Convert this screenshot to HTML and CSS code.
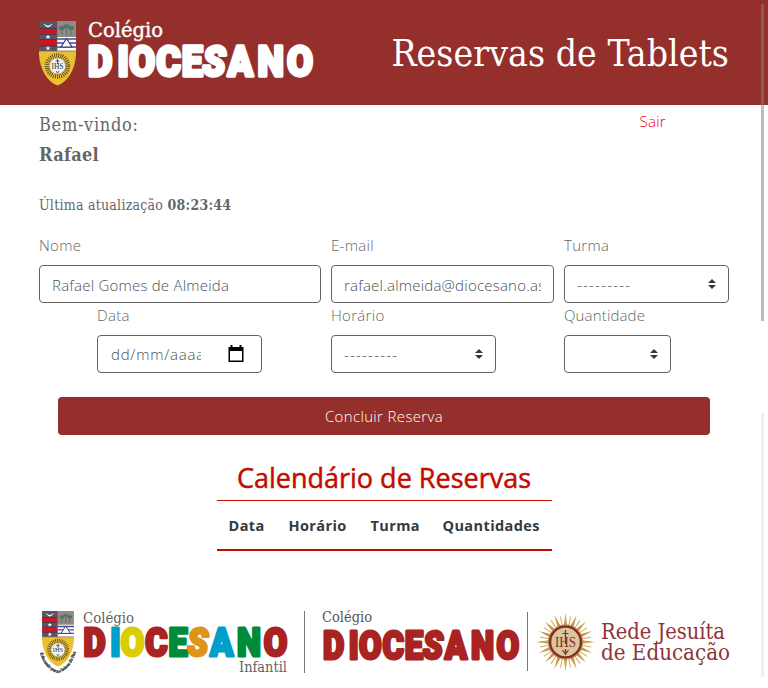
FILE: index.html
```
<!DOCTYPE html>
<html lang="pt-BR">
<head>
<meta charset="utf-8">
<title>Reservas de Tablets</title>
<link rel="stylesheet" href="styles.css">
</head>
<body>
<svg class="defs" width="0" height="0" aria-hidden="true">
  <symbol id="crest" viewBox="0 0 37 65">
    <clipPath id="shield"><path d="M0 0H37V34C36 48 29 61 18.500 64.500C8 61 1 48 0 34Z"/></clipPath>
    <g clip-path="url(#shield)">
      <rect width="37" height="65" fill="#eabf32"/>
      <rect width="18" height="30" fill="#595365"/>
      <path d="M0 8H18V13H0ZM0 19H18V24.500H0Z" fill="#cb1624"/>
      <path d="M0 7.500H18M0 13.300H18M0 18.500H18M0 24.800H18" stroke="#332c3c" stroke-width=".6"/>
      <path d="M5 3Q9 7 13 3Q9 9 5 3Z" fill="#fff" stroke="#fff" stroke-width=".6"/>
      <path d="M9 13.500L9.700 15.200H11.500L10.100 16.300L10.600 18L9 17L7.400 18L7.900 16.300L6.500 15.200H8.300ZM9 24.700L9.700 26.400H11.500L10.100 27.500L10.600 29.200L9 28.200L7.400 29.200L7.900 27.500L6.500 26.400H8.300Z" fill="#fff"/>
      <rect x="18" width="19" height="16" fill="#918b85"/>
      <g fill="#52736a"><ellipse cx="23" cy="7" rx="3" ry="2"/><ellipse cx="32" cy="7" rx="3" ry="2"/><ellipse cx="27.500" cy="5" rx="3" ry="1.800"/></g>
      <path d="M23 7V14M32 7V14M27.500 5V14" stroke="#52736a" stroke-width="1"/>
      <rect x="18" y="16" width="19" height="14" fill="#fff"/>
      <path d="M18 18H37M18 22H37M18 26H37" stroke="#4a489c" stroke-width="1.500"/>
      <path d="M27.500 17.500L33 26H22Z" fill="#fff" stroke="#34356f" stroke-width="1.100"/>
      <path d="M18 0V30M0 30H37" stroke="#6c6051" stroke-width=".7"/>
      <circle cx="18.500" cy="45" r="10.500" fill="none" stroke="#4a4120" stroke-width="4.500" stroke-dasharray=".8 1.200"/>
      <circle cx="18.500" cy="45" r="8" fill="#f4f2ed" stroke="#777" stroke-width=".4"/>
      <text x="18.500" y="48" class="ihs" font-size="7.500" fill="#333">IHS</text>
      <path d="M18.500 38V43M16.500 40H20.500M17 50L18.500 52L20 50" stroke="#333" stroke-width=".8" fill="none"/>
    </g>
  </symbol>
</svg>

<header class="topbar">
  <svg class="brand" width="276" height="66" viewBox="0 0 276 66">
    <use href="#crest" x="0" y="0" width="37" height="65"/>
    <text class="serif" x="49" y="16" font-size="20" textLength="75" lengthAdjust="spacingAndGlyphs" fill="#fff" stroke="#fff" stroke-width=".35">Colégio</text>
    <g transform="translate(49 55) scale(.3268 .376)"><text class="wordmark" fill="#fff" stroke="#fff" x="0 90 126 209 287 351 427 519 609">DIOCE<tspan class="lean">S</tspan>ANO</text></g>
  </svg>
  <h1>Reservas de Tablets</h1>
</header>

<main>
  <section class="welcome">
    <div>
      <p class="hello">Bem-vindo:</p>
      <p class="hello user">Rafael</p>
      <p class="updated">Última atualização <b>08:23:44</b></p>
    </div>
    <a class="logout">Sair</a>
  </section>

  <form>
    <div class="fields">
      <label>Nome<input value="Rafael Gomes de Almeida"></label>
      <label>E-mail<input value="rafael.almeida@diocesano.asav.org.br"></label>
      <label>Turma<span class="control select"><i>---------</i><svg width="8" height="10" viewBox="0 0 4 5"><path d="M2 0L0 2h4zm0 5L0 3h4z"/></svg></span></label>
      <label class="date">Data<span class="control"><span class="mask">dd/mm/aaaa</span><svg class="cal" width="16" height="18" viewBox="0 0 16 18"><path fill-rule="evenodd" d="M2.500 0H4.500V2H11.500V0H13.500V2H15.500V17H.5V2H2.500ZM2 6V15.500H14V6Z"/></svg></span></label>
      <label class="time">Horário<span class="control select"><i>---------</i><svg width="8" height="10" viewBox="0 0 4 5"><path d="M2 0L0 2h4zm0 5L0 3h4z"/></svg></span></label>
      <label class="qty">Quantidade<span class="control select"><i></i><svg width="8" height="10" viewBox="0 0 4 5"><path d="M2 0L0 2h4zm0 5L0 3h4z"/></svg></span></label>
    </div>
    <button type="button">Concluir Reserva</button>
  </form>

  <section class="calendar">
    <h2>Calendário de Reservas</h2>
    <table><thead><tr><th>Data</th><th>Horário</th><th>Turma</th><th>Quantidades</th></tr></thead></table>
  </section>
</main>

<footer>
  <svg width="249" height="70" viewBox="0 0 249 70">
    <use href="#crest" x="3" y="3" width="32" height="56"/>
    <path id="ribbon" d="M1 45C4 56 11 63 19 65C27 63 34 55 37 43" fill="none"/>
    <text class="motto"><textPath href="#ribbon" textLength="57">Educando para a beleza da Paz</textPath></text>
    <text class="serif" x="44" y="15" font-size="15" textLength="51" lengthAdjust="spacingAndGlyphs" fill="#626262">Colégio</text>
    <g transform="translate(44.500 48) scale(.296 .337)"><text class="wordmark" x="0 90 126 209 287 351 427 519 609"><tspan class="c-red">D</tspan><tspan class="c-sky">I</tspan><tspan class="c-yellow">O</tspan><tspan class="c-red">C</tspan><tspan class="c-green">E</tspan><tspan class="c-orange lean">S</tspan><tspan class="c-sky">A</tspan><tspan class="c-green">N</tspan><tspan class="c-red">O</tspan></text></g>
    <text class="serif" x="200" y="64" font-size="15" textLength="48" lengthAdjust="spacingAndGlyphs" fill="#626262">Infantil</text>
  </svg>
  <span class="rule first"></span>
  <svg width="198" height="68" viewBox="0 0 198 68">
    <text class="serif" x="0" y="14" font-size="15" textLength="50" lengthAdjust="spacingAndGlyphs" fill="#565656">Colégio</text>
    <g transform="translate(1 51.300) scale(.285 .333)"><text class="wordmark c-red" x="0 90 126 209 287 351 427 519 609">DIOCE<tspan class="lean">S</tspan>ANO</text></g>
  </svg>
  <span class="rule second"></span>
  <svg width="196" height="68" viewBox="0 0 196 68">
    <g transform="translate(30.500 34)">
      <g fill="#c89a43"><path id="rays" d="M-2 -15L0 -29L2 -15ZM-2 15L0 29L2 15ZM-15 -2L-29 0L-15 2ZM15 -2L29 0L15 2Z"/><use href="#rays" transform="rotate(22.500)"/><use href="#rays" transform="rotate(45)"/><use href="#rays" transform="rotate(67.500)"/></g>
      <g stroke="#d1aa65" stroke-width="1"><path id="thin" d="M0 -26V26M-26 0H26"/><use href="#thin" transform="rotate(11.250)"/><use href="#thin" transform="rotate(33.750)"/><use href="#thin" transform="rotate(56.250)"/><use href="#thin" transform="rotate(78.750)"/></g>
      <circle r="15.500" fill="#dbc69b" stroke="#852b2c" stroke-width="2.500"/>
      <circle r="17.200" fill="none" stroke="#b7834a" stroke-width=".8"/>
      <text class="ihs" y="5" font-size="15" fill="#852b2c" textLength="21" lengthAdjust="spacingAndGlyphs">IHS</text>
      <path d="M0 -12V2M-3 -8.500H3M0 7V13M-3 8L0 12L3 8" fill="none" stroke="#852b2c" stroke-width="1.200"/>
    </g>
    <g class="serif" fill="#8f3438" font-size="22">
      <text x="66" y="31" textLength="124" lengthAdjust="spacingAndGlyphs">Rede Jesuíta</text>
      <text x="66" y="52" textLength="129" lengthAdjust="spacingAndGlyphs">de Educação</text>
    </g>
  </svg>
</footer>
<div class="scroll thumb"></div>
<div class="scroll track"></div>
</body>
</html>
```
FILE: styles.css
```
* { box-sizing: border-box; }
body { margin: 0; width: 768px; height: 688px; overflow: hidden; background: #fff; color: #666; font: 300 15px/24px "Open Sans", "Noto Sans", sans-serif; }
.defs { position: absolute; }
p, h1, h2 { margin: 0; }
svg { display: block; flex: none; overflow: visible; }

.serif, .ihs { font-family: "DejaVu Serif Condensed", "DejaVu Serif", serif; font-stretch: condensed; font-weight: 400; }
.ihs { text-anchor: middle; font-family: "Liberation Serif", serif; }
.motto { font: 700 4.500px "Liberation Serif", serif; fill: #222; stroke: #222; stroke-width: .2px; }
.wordmark { font: 900 115px Roboto, sans-serif; stroke-width: 9px; stroke-linejoin: round; }
.lean { font-style: italic; }
.c-red { fill: #aa2323; stroke: #aa2323; }
.c-sky { fill: #009fca; stroke: #009fca; }
.c-yellow { fill: #dccd00; stroke: #dccd00; }
.c-green { fill: #008b3a; stroke: #008b3a; }
.c-orange { fill: #df9416; stroke: #df9416; }

.topbar { height: 105px; padding: 21px 39px 0; display: flex; justify-content: space-between; background: #952f2b; }
h1 { margin-top: 7px; color: #fff; font: 400 37px/52px "DejaVu Serif", serif; font-stretch: condensed; letter-spacing: .05px; white-space: nowrap; }

main { padding: 0 39px; }
.welcome { display: flex; justify-content: space-between; height: 129px; padding: 5px 63px 0 0; font-family: "DejaVu Serif", serif; font-stretch: condensed; font-weight: 400; }
.hello { font-size: 18px; line-height: 30px; letter-spacing: .7px; }
.user { font-weight: 700; letter-spacing: .3px; }
.updated { margin-top: 23px; font-size: 14px; line-height: 24px; letter-spacing: .25px; }
.logout { color: #f00000; font: 300 15px/22px "Open Sans", sans-serif; letter-spacing: .3px; }

.fields { display: grid; grid-template-columns: 282px 223px 165px; column-gap: 10px; }
label { display: block; height: 70px; line-height: 22px; letter-spacing: .3px; }
input, .control { display: flex; align-items: center; width: 100%; height: 38px; margin: 9px 0 0; padding: 1px 12px 0; border: 1px solid #626262; border-radius: 4px; background: #fff; color: #495057; font: inherit; letter-spacing: .2px; }
input { letter-spacing: .22px; }
.date { padding-left: 58px; }
.date .control { width: 165px; padding: 0 17px 0 13px; justify-content: space-between; }
.mask { width: 90px; overflow: hidden; white-space: nowrap; letter-spacing: .75px; }
.cal { fill: #000; }
.time .control { width: 165px; }
.qty { letter-spacing: .15px; }
.qty .control { width: 107px; }
.select { justify-content: space-between; padding: 0 12px; }
.select i { font-style: normal; letter-spacing: 1.200px; }
.select svg { fill: #343a40; }
button { display: block; width: 652px; height: 38px; margin: 23px auto 0; padding: 0; border: 0; border-radius: 4px; background: #952f2b; color: #fff; font: inherit; letter-spacing: .35px; }

.calendar { width: 335px; margin: 26px auto 0; }
h2 { height: 39px; color: #c10c00; font: 500 27px/34px "Open Sans", sans-serif; text-align: center; white-space: nowrap; -webkit-text-stroke: .5px #c10c00; }
table { width: 335px; table-layout: fixed; border-collapse: separate; border-spacing: 0; }
th { height: 51px; padding: 2px 0 0 12px; border-top: 1px solid #c10c00; border-bottom: 2px solid #c10c00; color: #343a40; font-size: 14.500px; font-weight: 700; text-align: left; letter-spacing: .4px; }
th:nth-child(1) { width: 60px; }
th:nth-child(2) { width: 82px; }
th:nth-child(3) { width: 72px; }

footer { display: flex; margin: 57px 0 0 39px; }
.rule { width: 1px; background: #777; }
.first { height: 62px; margin: 3px 17px 0 16px; }
.second { height: 59px; margin: 4px 7px 0 7px; }
.scroll { position: absolute; left: 761px; width: 3px; }
.thumb { top: 4px; height: 317px; background: rgba(128,128,128,.52); }
.track { top: 413px; height: 264px; background: #efefef; }
```
